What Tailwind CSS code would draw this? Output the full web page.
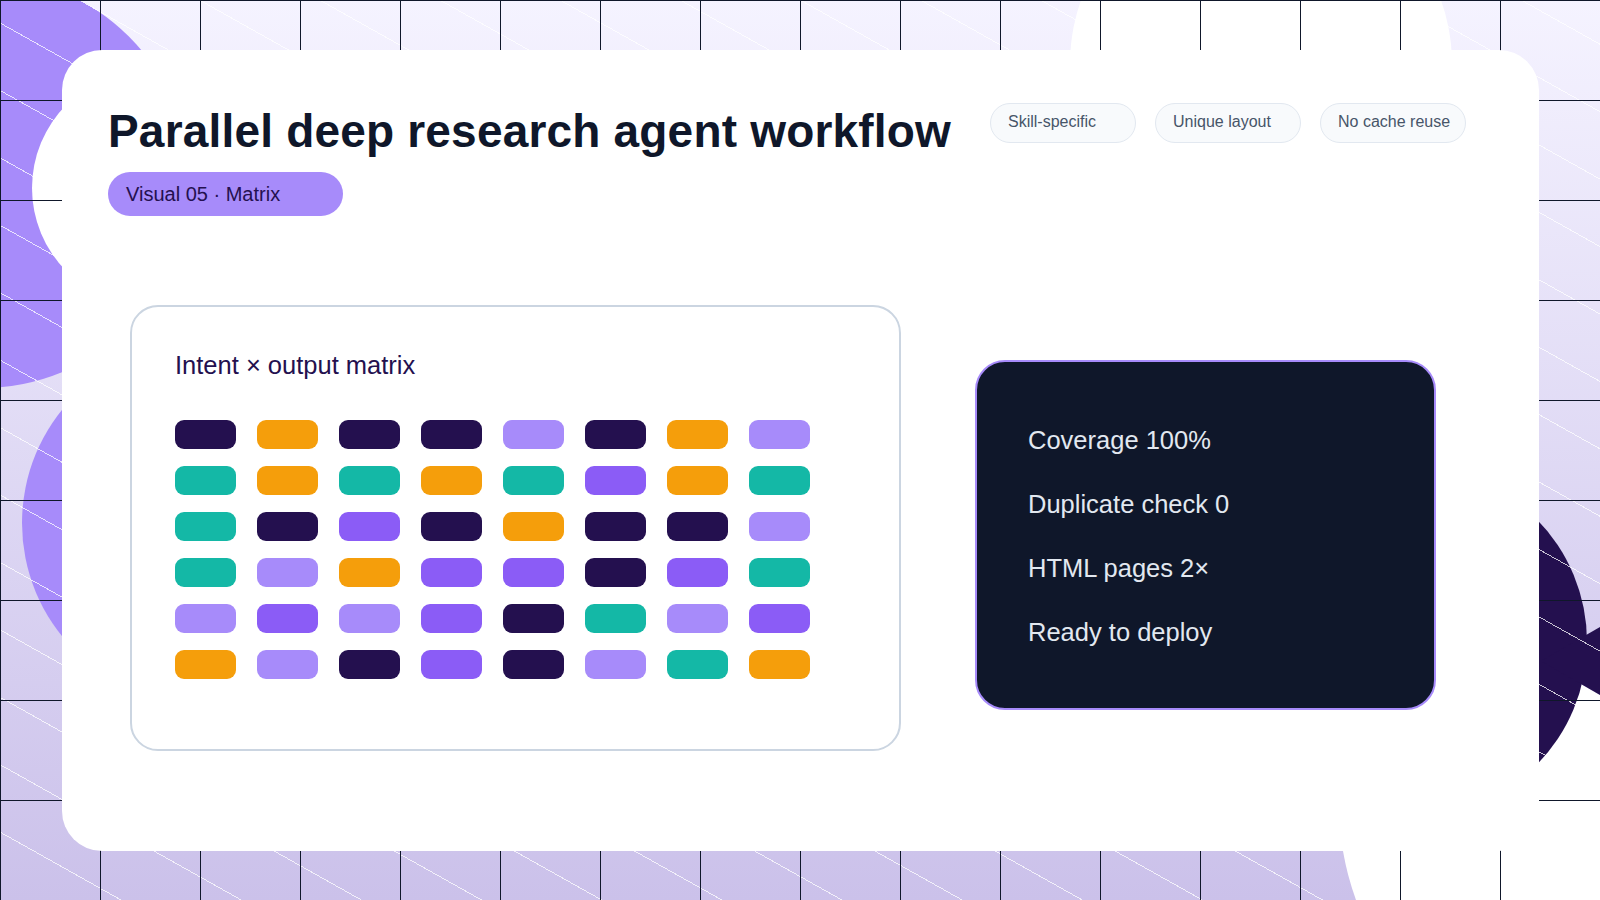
<!DOCTYPE html>
<html lang="en">
  <head>
    <meta charset="UTF-8" />
    <title>Parallel deep research agent workflow</title>
    <script src="https://cdn.jsdelivr.net/npm/@tailwindcss/browser@4"></script>
  </head>
  <body class="font-['Liberation_Sans',Arial,sans-serif]">
    <div class="relative w-[1600px] h-[900px] overflow-hidden bg-gradient-to-b from-[#f5f3ff] to-[#cbc1ea]">
      <!-- backdrop shapes -->
      <svg class="absolute inset-0" width="1600" height="900" viewBox="0 0 1600 900">
        <circle cx="-17" cy="182" r="206" fill="#a78bfa" />
        <circle cx="150" cy="188" r="118" fill="#fff" />
        <circle cx="202" cy="523" r="180" fill="#a78bfa" />
        <circle cx="1261" cy="64" r="191" fill="#fff" />
        <path d="M1541 661 L1600 695 L1600 900 L1356 900 Q1347 875 1343 851 L1400 700 Z" fill="#fff" />
        <circle cx="1412" cy="642" r="175" fill="#24104f" />
        <path d="M1541 661 L1600 627 L1600 695 Z" fill="#24104f" />
      </svg>
      <!-- diagonal hairlines -->
      <div class="absolute inset-0 bg-[repeating-linear-gradient(29.3deg,#ffffffc0_0,#ffffffc0_0.9px,transparent_0.9px,transparent_58.8px)]"></div>
      <!-- grid -->
      <div class="absolute inset-0 bg-[linear-gradient(#0f172a_1px,transparent_1px),linear-gradient(90deg,#0f172a_1px,transparent_1px)] bg-[size:100px_100px]"></div>

      <div class="relative ml-[62px] top-[50px] w-[1477px] h-[801px] bg-white rounded-[40px]">
        <div class="flex items-start pl-[46px] pt-[53px]">
          <div>
            <h1 class="text-[46px] leading-[56px] tracking-[0.19px] font-bold text-[#0f172a] whitespace-nowrap">Parallel deep research agent workflow</h1>
            <div class="mt-[13px] w-[235px] h-[44px] pl-[18px] flex items-center rounded-full bg-[#a78bfa] text-[20px] text-[#24104f]">Visual 05 · Matrix</div>
          </div>
          <div class="flex gap-[19px] ml-[39px]">
            <span class="w-[146px] h-[40px] pl-[17px] pt-[7px] rounded-full border border-[#e2e8f0] bg-[#f8fafc] text-[16px] leading-[22px] text-[#475569]">Skill-specific</span>
            <span class="w-[146px] h-[40px] pl-[17px] pt-[7px] rounded-full border border-[#e2e8f0] bg-[#f8fafc] text-[16px] leading-[22px] text-[#475569]">Unique layout</span>
            <span class="w-[146px] h-[40px] pl-[17px] pt-[7px] rounded-full border border-[#e2e8f0] bg-[#f8fafc] text-[16px] leading-[22px] text-[#475569]">No cache reuse</span>
          </div>
        </div>

        <div class="flex items-start mt-[89px] pl-[68px]">
          <div class="w-[771px] h-[446px] border-2 border-[#cbd5e1] rounded-[28px] pl-[43px] pt-[43px]">
            <h2 class="text-[25.5px] leading-[30px] text-[#24104f]">Intent × output matrix</h2>
            <div class="grid grid-cols-[repeat(8,61px)] auto-rows-[29px] gap-x-[21px] gap-y-[17px] mt-[40px]">
              <div class="rounded-[9px] bg-[#24104f]"></div>
              <div class="rounded-[9px] bg-[#f59e0b]"></div>
              <div class="rounded-[9px] bg-[#24104f]"></div>
              <div class="rounded-[9px] bg-[#24104f]"></div>
              <div class="rounded-[9px] bg-[#a78bfa]"></div>
              <div class="rounded-[9px] bg-[#24104f]"></div>
              <div class="rounded-[9px] bg-[#f59e0b]"></div>
              <div class="rounded-[9px] bg-[#a78bfa]"></div>

              <div class="rounded-[9px] bg-[#14b8a6]"></div>
              <div class="rounded-[9px] bg-[#f59e0b]"></div>
              <div class="rounded-[9px] bg-[#14b8a6]"></div>
              <div class="rounded-[9px] bg-[#f59e0b]"></div>
              <div class="rounded-[9px] bg-[#14b8a6]"></div>
              <div class="rounded-[9px] bg-[#8b5cf6]"></div>
              <div class="rounded-[9px] bg-[#f59e0b]"></div>
              <div class="rounded-[9px] bg-[#14b8a6]"></div>

              <div class="rounded-[9px] bg-[#14b8a6]"></div>
              <div class="rounded-[9px] bg-[#24104f]"></div>
              <div class="rounded-[9px] bg-[#8b5cf6]"></div>
              <div class="rounded-[9px] bg-[#24104f]"></div>
              <div class="rounded-[9px] bg-[#f59e0b]"></div>
              <div class="rounded-[9px] bg-[#24104f]"></div>
              <div class="rounded-[9px] bg-[#24104f]"></div>
              <div class="rounded-[9px] bg-[#a78bfa]"></div>

              <div class="rounded-[9px] bg-[#14b8a6]"></div>
              <div class="rounded-[9px] bg-[#a78bfa]"></div>
              <div class="rounded-[9px] bg-[#f59e0b]"></div>
              <div class="rounded-[9px] bg-[#8b5cf6]"></div>
              <div class="rounded-[9px] bg-[#8b5cf6]"></div>
              <div class="rounded-[9px] bg-[#24104f]"></div>
              <div class="rounded-[9px] bg-[#8b5cf6]"></div>
              <div class="rounded-[9px] bg-[#14b8a6]"></div>

              <div class="rounded-[9px] bg-[#a78bfa]"></div>
              <div class="rounded-[9px] bg-[#8b5cf6]"></div>
              <div class="rounded-[9px] bg-[#a78bfa]"></div>
              <div class="rounded-[9px] bg-[#8b5cf6]"></div>
              <div class="rounded-[9px] bg-[#24104f]"></div>
              <div class="rounded-[9px] bg-[#14b8a6]"></div>
              <div class="rounded-[9px] bg-[#a78bfa]"></div>
              <div class="rounded-[9px] bg-[#8b5cf6]"></div>

              <div class="rounded-[9px] bg-[#f59e0b]"></div>
              <div class="rounded-[9px] bg-[#a78bfa]"></div>
              <div class="rounded-[9px] bg-[#24104f]"></div>
              <div class="rounded-[9px] bg-[#8b5cf6]"></div>
              <div class="rounded-[9px] bg-[#24104f]"></div>
              <div class="rounded-[9px] bg-[#a78bfa]"></div>
              <div class="rounded-[9px] bg-[#14b8a6]"></div>
              <div class="rounded-[9px] bg-[#f59e0b]"></div>
            </div>
          </div>

          <div class="w-[461px] h-[350px] ml-[74px] mt-[55px] border-2 border-[#a78bfa] rounded-[30px] bg-[#0f172a] pl-[51px] pt-[63px] flex flex-col gap-[34px] text-[25.5px] leading-[30px] text-[#e2e8f0]">
            <div>Coverage 100%</div>
            <div>Duplicate check 0</div>
            <div>HTML pages 2×</div>
            <div>Ready to deploy</div>
          </div>
        </div>
      </div>
    </div>
  </body>
</html>
